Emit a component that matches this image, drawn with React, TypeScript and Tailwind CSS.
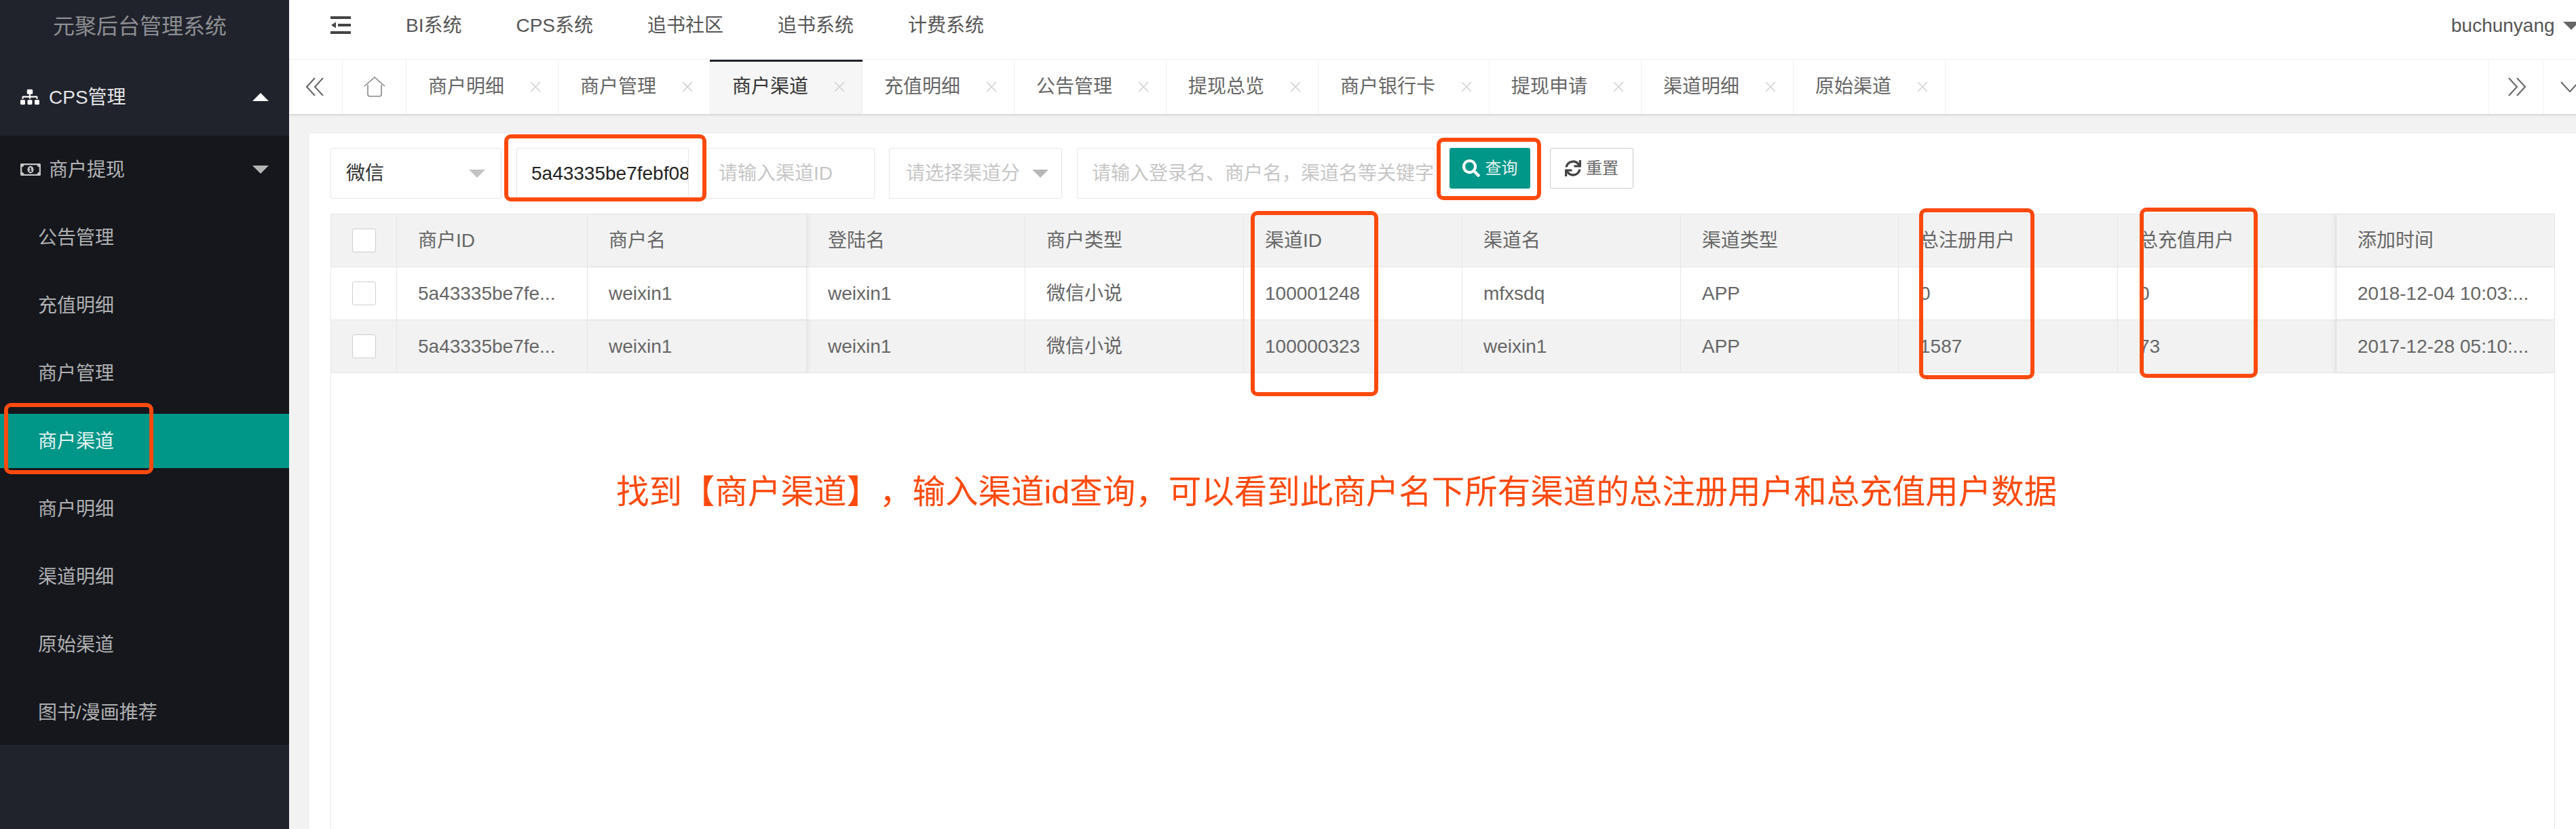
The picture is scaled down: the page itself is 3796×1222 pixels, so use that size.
import React from "react";
import { FaSitemap, FaRegMoneyBillAlt, FaSearch, FaSync } from "react-icons/fa";

const Triangle = ({ up, className }: { up?: boolean; className: string }) => (
  <svg viewBox="0 0 24 12" className={className} fill="currentColor">
    <path d={up ? "M12 0 L24 12 L0 12 Z" : "M0 0 L24 0 L12 12 Z"} />
  </svg>
);

const CloseX = () => (
  <svg viewBox="0 0 16 16" className="w-[16px] h-[16px] text-[#d2d2d2] shrink-0" fill="none" stroke="currentColor" strokeWidth="1.6">
    <path d="M1 1 L15 15 M15 1 L1 15" />
  </svg>
);

const menu = ["公告管理", "充值明细", "商户管理", "商户渠道", "商户明细", "渠道明细", "原始渠道", "图书/漫画推荐"];
const navs = ["BI系统", "CPS系统", "追书社区", "追书系统", "计费系统"];
const tabs = ["商户明细", "商户管理", "商户渠道", "充值明细", "公告管理", "提现总览", "商户银行卡", "提现申请", "渠道明细", "原始渠道"];
const head = ["商户ID", "商户名", "登陆名", "商户类型", "渠道ID", "渠道名", "渠道类型", "总注册用户", "总充值用户", "添加时间"];
const rows = [
  ["5a43335be7fe...", "weixin1", "weixin1", "微信小说", "100001248", "mfxsdq", "APP", "0", "0", "2018-12-04 10:03:..."],
  ["5a43335be7fe...", "weixin1", "weixin1", "微信小说", "100000323", "weixin1", "APP", "1587", "73", "2017-12-28 05:10:..."],
];

const Checkbox = () => <div className="w-[35px] h-[35px] bg-white border border-[#cfcfcf] rounded-[3px]" />;

const Row = ({ cells, className, text }: { cells: string[]; className: string; text: string }) => (
  <div className={`grid grid-cols-[97px_281px_323px_322px_322px_322px_322px_321px_323px_322px_1fr] h-[78px] border-b border-[#e6e6e6] ${className}`}>
    <div className="flex items-center justify-center border-r border-[#e6e6e6]">
      <Checkbox />
    </div>
    {cells.map((c, i) => (
      <div
        key={i}
        className={`flex items-center pl-[31px] whitespace-nowrap overflow-hidden ${text} ${i < 9 ? "border-r border-[#e6e6e6]" : ""} ${i === 9 ? "shadow-[-4px_0_6px_rgba(0,0,0,0.05)]" : ""} ${i === 1 ? "shadow-[3px_0_5px_rgba(0,0,0,0.05)]" : ""}`}
      >
        {c}
      </div>
    ))}
  </div>
);

const Mark = ({ className }: { className: string }) => (
  <div className={`absolute border-[6px] border-[#fc4a0e] rounded-[10px] ${className}`} />
);

export default function App() {
  return (
    <div className="relative flex w-[3796px] h-[1222px] overflow-hidden text-[28px] font-['Liberation_Sans','Noto_Sans_CJK_SC',sans-serif] bg-white">
      <aside className="w-[426px] shrink-0 bg-[#20232c] flex flex-col">
        <div className="h-[86px] pb-[8px] pl-[78px] flex items-center text-[32px] text-[#8d8e92]">元聚后台管理系统</div>
        <div className="h-[114px] pl-[30px] pr-[30px] flex items-center text-[#e4e4e6]">
          <FaSitemap className="w-[28px] h-[24px] text-white mr-[14px]" />
          <span className="pt-[2px]">CPS管理</span>
          <Triangle up className="w-[24px] h-[12px] text-white ml-auto" />
        </div>
        <div className="bg-[#15171d]">
          <div className="h-[100px] pl-[30px] pr-[30px] flex items-center text-[#b4b4b6]">
            <FaRegMoneyBillAlt className="w-[30px] h-[30px] text-[#c4c4c4] mr-[12px]" />
            <span className="pt-[2px]">商户提现</span>
            <Triangle className="w-[24px] h-[12px] text-[#b4b4b6] ml-auto" />
          </div>
          <div className="flex flex-col gap-[20px] pt-[10px] pb-[8px]">
            {menu.map((m) => (
              <div
                key={m}
                className={`h-[80px] pl-[56px] pt-[2px] flex items-center ${m === "商户渠道" ? "bg-[#009688] text-[#e4f3f1]" : "text-[#b0b0b2]"}`}
              >
                {m}
              </div>
            ))}
          </div>
        </div>
      </aside>

      <main className="flex-1 min-w-0 flex flex-col bg-[#f2f2f2]">
        <header className="h-[87px] shrink-0 bg-white flex items-center text-[#555] relative">
          <svg viewBox="0 0 30 26" className="w-[30px] h-[26px] ml-[61px] mb-[13px] text-[#444]" fill="currentColor">
            <rect x="0" y="0" width="30" height="4" />
            <rect x="0" y="22" width="30" height="4" />
            <rect x="11" y="11" width="19" height="4" />
            <path d="M1 13 L8 8.5 L8 17.5 Z" />
          </svg>
          <nav className="flex gap-[80px] ml-[81px] mb-[11px]">
            {navs.map((n) => (
              <span key={n}>{n}</span>
            ))}
          </nav>
          <div className="ml-auto flex items-center mb-[11px] w-[184px]">
            <span>buchunyang</span>
            <Triangle className="w-[24px] h-[12px] ml-[12px] shrink-0 text-[#666]" />
          </div>
        </header>

        <div className="h-[81px] shrink-0 bg-white border-t border-[#f2f2f2] flex items-stretch shadow-[0_2px_3px_rgba(0,0,0,0.12)] relative text-[#666] overflow-hidden">
          <div className="w-[79px] shrink-0 border-r border-[#f0f0f0] flex items-center justify-center">
            <svg viewBox="0 0 28 28" className="w-[28px] h-[28px] text-[#666]" fill="none" stroke="currentColor" strokeWidth="2">
              <path d="M13 1 L1 14 L13 27 M25 1 L13 14 L25 27" />
            </svg>
          </div>
          <div className="w-[94px] shrink-0 border-r border-[#f0f0f0] flex items-center justify-center">
            <svg viewBox="0 0 32 30" className="w-[32px] h-[30px] text-[#888]" fill="none" stroke="currentColor" strokeWidth="1.6">
              <path d="M1 14 L16 1 L31 14 M6 12 L6 26 Q6 29 9 29 L23 29 Q26 29 26 26 L26 12" />
            </svg>
          </div>
          {tabs.map((t) => {
            const active = t === "商户渠道";
            return (
              <div
                key={t}
                className={`shrink-0 flex items-center pl-[32px] border-r border-[#f0f0f0] relative ${t.length === 5 ? "w-[252px]" : "w-[224px]"} ${active ? "bg-[#f6f6f6] text-[#333]" : ""}`}
              >
                {active && <div className="absolute -top-px -left-px -right-px h-[4px] bg-[#20222c]" />}
                <span className="whitespace-nowrap">{t}</span>
                <span className="ml-[38px]">
                  <CloseX />
                </span>
              </div>
            );
          })}
          <div className="ml-auto w-[80px] shrink-0 border-l border-[#f0f0f0] flex items-center justify-center">
            <svg viewBox="0 0 28 28" className="w-[28px] h-[28px] text-[#666]" fill="none" stroke="currentColor" strokeWidth="2">
              <path d="M3 1 L15 14 L3 27 M15 1 L27 14 L15 27" />
            </svg>
          </div>
          <div className="w-[49px] shrink-0 border-l border-[#f0f0f0] flex items-center pl-[25px]">
            <svg viewBox="0 0 28 16" className="w-[28px] h-[16px] shrink-0 text-[#666]" fill="none" stroke="currentColor" strokeWidth="2">
              <path d="M1 1 L14 15 L27 1" />
            </svg>
          </div>
        </div>

        <div className="flex-1 min-h-0 pt-[29px] pl-[30px] flex flex-col">
          <div className="flex-1 min-h-0 bg-white rounded-tl-[4px] pt-[21px] pl-[31px] pr-[31px] flex flex-col">
            <div className="flex items-start h-[75px] shrink-0">
              <div className="w-[252px] h-[75px] border border-[#e6e6e6] rounded-[3px] flex items-center pl-[22px] pr-[23px] text-[#333]">
                <span>微信</span>
                <Triangle className="w-[24px] h-[12px] ml-auto text-[#c2c2c2]" />
              </div>
              <input
                readOnly
                value="5a43335be7febf08"
                className="w-[254px] h-[75px] ml-[22px] border border-[#e6e6e6] rounded-[3px] pl-[21px] text-[#222] outline-none"
              />
              <input
                readOnly
                placeholder="请输入渠道ID"
                className="w-[252px] h-[75px] ml-[22px] border border-[#e6e6e6] rounded-[3px] pl-[21px] placeholder:text-[#c6c6c6] outline-none"
              />
              <div className="w-[255px] h-[75px] ml-[21px] border border-[#e6e6e6] rounded-[3px] flex items-center pl-[24px] pr-[19px] text-[#c6c6c6]">
                <span className="w-[169px] overflow-hidden whitespace-nowrap">请选择渠道分类</span>
                <Triangle className="w-[24px] h-[12px] ml-auto text-[#b8b8b8]" />
              </div>
              <input
                readOnly
                placeholder="请输入登录名、商户名，渠道名等关键字"
                className="w-[528px] h-[75px] ml-[22px] border border-[#e6e6e6] rounded-[3px] pl-[21px] pr-[2px] placeholder:text-[#c6c6c6] outline-none"
              />
              <button className="w-[119px] h-[60px] ml-[21px] bg-[#009688] rounded-[3px] flex items-center justify-center gap-[8px] text-[#e4f3f1] text-[24px]">
                <FaSearch className="w-[26px] h-[26px] text-white" />
                <span>查询</span>
              </button>
              <button className="w-[123px] h-[60px] ml-[29px] bg-white border border-[#c9c9c9] rounded-[3px] flex items-center justify-center gap-[7px] text-[#666] text-[24px]">
                <FaSync className="w-[24px] h-[24px] text-[#444]" />
                <span>重置</span>
              </button>
            </div>

            <div className="mt-[22px] flex-1 min-h-0 border border-b-0 border-[#e6e6e6] bg-white">
              <Row cells={head} className="bg-[#f2f2f2]" text="text-[#666]" />
              <Row cells={rows[0]} className="bg-white" text="text-[#666]" />
              <Row cells={rows[1]} className="bg-[#f2f2f2]" text="text-[#666]" />
            </div>
          </div>
        </div>
      </main>

      <Mark className="left-[6px] top-[594px] w-[220px] h-[105px]" />
      <Mark className="left-[743px] top-[198px] w-[298px] h-[99px]" />
      <Mark className="left-[2117px] top-[203px] w-[154px] h-[92px]" />
      <Mark className="left-[1843px] top-[311px] w-[188px] h-[273px]" />
      <Mark className="left-[2828px] top-[307px] w-[170px] h-[252px]" />
      <Mark className="left-[3153px] top-[306px] w-[174px] h-[251px]" />
      <div className="absolute left-[908px] top-[695px] text-[48.5px] leading-[60px] [text-spacing-trim:space-all] text-[#fc4a0e] whitespace-nowrap">
        找到【商户渠道】，输入渠道id查询，可以看到此商户名下所有渠道的总注册用户和总充值用户数据
      </div>
    </div>
  );
}
